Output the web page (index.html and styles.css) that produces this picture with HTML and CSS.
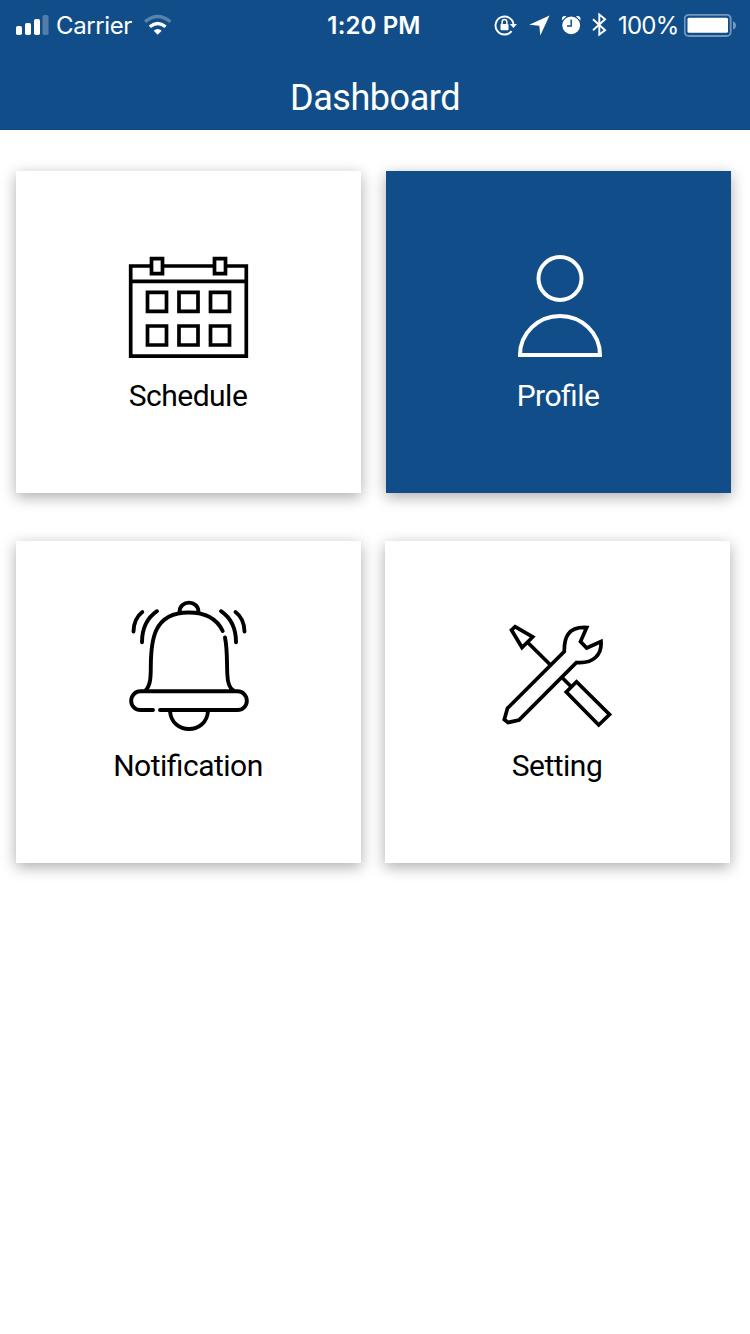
FILE: index.html
```html
<!DOCTYPE html>
<html lang="en">
<head>
<meta charset="utf-8">
<title>Dashboard</title>
<link rel="stylesheet" href="styles.css">
</head>
<body>
<header class="header">
  <div class="status">
    <div class="status-left">
      <svg class="signal" width="34" height="50" viewBox="15 0 34 50" fill="#fff">
        <rect x="16" y="26" width="6" height="9" rx="1.7"/>
        <rect x="25" y="23" width="6" height="12" rx="1.7"/>
        <rect x="34" y="19" width="6" height="16" rx="1.7"/>
        <rect x="42.5" y="15" width="6" height="20" rx="1.7" opacity=".27"/>
      </svg>
      <span class="carrier">Carrier</span>
      <svg width="28" height="50" viewBox="144 0 28 50" fill="none" stroke="#fff" stroke-width="3.4">
        <path d="M145 21.8Q157.700 11.300 170.400 21.800" opacity=".3"/>
        <path d="M149.800 26.700Q157.700 20.300 165.600 26.700"/>
        <path d="M153.700 30.800Q157.700 27.200 161.700 30.800L157.700 34.800Z" fill="#fff" stroke="none"/>
      </svg>
    </div>
    <div class="clock">1:20 PM</div>
    <div class="status-right">
      <svg width="24" height="50" viewBox="494 0 24 50" fill="none" stroke="#fff" stroke-width="1.9">
        <path d="M511.600 31.100A9 9 0 1 1 513.500 24.500"/>
        <path d="M509.800 24H517L513.400 28Z" fill="#fff" stroke="none"/>
        <rect x="500.500" y="24" width="8" height="6.200" rx=".8" fill="#fff" stroke="none"/>
        <path d="M502.100 24.500V22.300a2.400 2.700 0 0 1 4.800 0V24.500" stroke-width="1.500"/>
      </svg>
      <svg width="21" height="50" viewBox="529 0 21 50" fill="#fff"><path d="M549.500 15.500 540.300 35.500 539.300 25.700 529.300 24.700Z"/></svg>
      <svg width="20" height="50" viewBox="561 0 20 50" fill="#fff">
        <circle cx="571.200" cy="25.300" r="8.900"/>
        <path d="M562 20.500V17.500Q563.500 15.500 566.500 16.200ZM580.400 20.500V17.500Q578.900 15.500 575.900 16.200Z"/>
        <path d="M571.200 19.500V26H567" fill="none" stroke="#124e89" stroke-width="1.500"/>
      </svg>
      <svg width="16" height="50" viewBox="592 0 16 50" fill="none" stroke="#fff" stroke-width="1.900"><path d="M593 19.300 605.100 30.200 599.300 34.600V14.500L605.100 19.300 593 30.200"/></svg>
      <span class="percent">100%</span>
      <svg width="52" height="50" viewBox="684 0 52 50">
        <rect x="684.700" y="14.800" width="46" height="21.200" rx="4" fill="none" stroke="#fff" stroke-width="1.800" opacity=".42"/>
        <rect x="687.500" y="17.800" width="40.500" height="15" rx="1.500" fill="#fff"/>
        <path d="M733 21.300Q736 22.500 736 25.400T733 29.500Z" fill="#fff" opacity=".42"/>
      </svg>
    </div>
  </div>
  <h1 class="title">Dashboard</h1>
</header>
<main class="cards">
  <section class="card">
    <svg class="icon" viewBox="119 227 140 140">
      <path d="M130.700 266H246.300V356.200H130.700ZM130.700 281.300H246.300"/>
      <path fill="#fff" d="M151.500 258.700H162.500V273.700H151.500ZM214.500 258.700H225.500V273.700H214.500Z"/>
      <path d="M147.500 292.300h19v19h-19zM179 292.300h19v19h-19zM210.500 292.300h19v19h-19zM147.500 326h19v19h-19zM179 326h19v19h-19zM210.500 326h19v19h-19z"/>
    </svg>
    <div class="label">Schedule</div>
  </section>
  <section class="card card-active">
    <svg class="icon icon-profile" viewBox="489 227 140 140">
      <circle cx="560" cy="278.500" r="21.500"/>
      <path d="M520 355A40 39 0 0 1 600 355Z"/>
    </svg>
    <div class="label">Profile</div>
  </section>
  <section class="card">
    <svg class="icon icon-bell" viewBox="119 597 140 140">
      <path d="M179.500 612C179.500 599.500 198.500 599.500 198.500 612"/>
      <path d="M145.500 690.500C150.500 686 150.800 677 150.800 666C151 641 153 612.500 188.700 612.500C206 612.500 217 619 222.700 631M225 637.500C227.500 650 226.700 661 227.300 674C227.600 683 229 688 233.500 690.500"/>
      <path d="M153 710H140.500A9.300 9.300 0 0 1 140.500 691.300H237.500A9.300 9.300 0 0 1 237.500 710H160"/>
      <path d="M170 711C171.500 735 206.500 735 208 711"/>
      <path d="M142.300 612C136.500 616.500 133.700 623 133.500 631.500M157 611.200C147 618 142 629 142 642.300M221 611.200C231 618 236 629 236 642.300M235.500 612C241.500 616.500 244.300 623 244.500 631.500"/>
    </svg>
    <div class="label">Notification</div>
  </section>
  <section class="card card-shifted">
    <svg class="icon icon-tools" viewBox="489 597 140 140">
      <path d="M565.300 651.500C565 638 568.500 626.500 587.700 627.500L581.500 641.500L587.700 648L602 641.500C603 654 595 664 577.500 662.500L520 720L509 722.500L505.300 719.500L508.500 708.300Z"/>
      <path d="M516 626.700 533.700 637 523 647.500 512.500 630ZM528.500 642.300 551.500 665M563.500 678 572.500 687M577.500 681.800 610.500 714.500 599.700 725 567.300 692Z"/>
    </svg>
    <div class="label">Setting</div>
  </section>
</main>
</body>
</html>
```

FILE: styles.css
```css
* { box-sizing: border-box; }
body { margin: 0; min-height: 1334px; background: #fff; font-family: Roboto, sans-serif; }
svg { display: block; flex: none; }
.header { height: 130px; background: #114e89; color: #fff; border-bottom: 1px solid #10477e; }
.status { height: 50px; padding: 0 14px 0 15px; display: grid; grid-template-columns: 1fr auto 1fr; align-items: center; font-family: Inter, sans-serif; font-size: 24px; line-height: 48px; }
.status-left, .status-right { display: flex; align-items: center; }
.status-right { justify-content: flex-end; gap: 11px; }
.carrier { width: 76px; padding-top: 2px; margin: 0 12px 0 7px; white-space: nowrap; letter-spacing: -.4px; }
.clock { padding-top: 2px; margin-left: -3px; font-weight: 600; letter-spacing: .15px; white-space: nowrap; }
.percent { width: 60px; padding-top: 2px; margin: 0 -5px 0 -1px; white-space: nowrap; letter-spacing: -.8px; }
.title { margin: 24px 0 0; font-size: 36px; line-height: 48px; font-weight: 400; text-align: center; letter-spacing: -.45px; }
.cards { padding: 41px 19px 0 16px; display: grid; grid-template-columns: 345px 345px; gap: 48px 25px; }
.card { height: 322px; padding-top: 56px; display: flex; flex-direction: column; align-items: center; background: #fff; color: #000; box-shadow: 0 4px 14px rgba(0, 0, 0, .33); }
.card-active { background: #114e89; color: #fff; }
.card-shifted { margin: 0 1px 0 -1px; width: 345px; }
.icon { width: 140px; height: 140px; fill: none; stroke: #000; stroke-width: 3.7; }
.icon-profile { stroke: #fff; stroke-width: 4; }
.icon-bell { stroke-width: 3.9; stroke-linecap: round; }
.icon-tools { stroke-width: 3.7; }
.label { margin: 9px 1px 0 0; font-size: 30px; line-height: 40px; letter-spacing: -.5px; font-feature-settings: "liga" 1; }
```
